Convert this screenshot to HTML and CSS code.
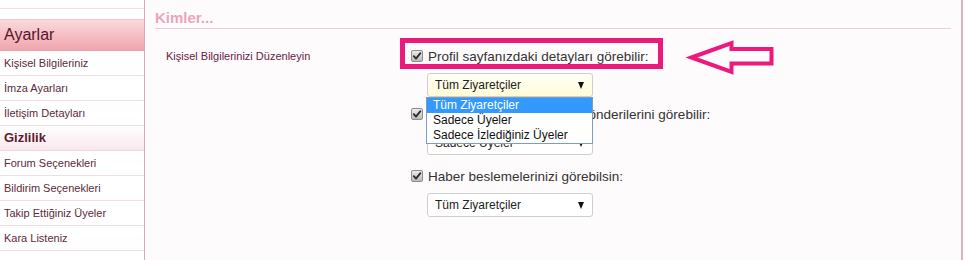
FILE: index.html
```html
<!DOCTYPE html>
<html lang="tr">
<head>
<meta charset="utf-8">
<title>Gizlilik</title>
<link rel="stylesheet" href="styles.css">
</head>
<body>
<div class="page">
  <aside class="sidebar">
    <div class="item"></div>
    <div class="group group-main">Ayarlar</div>
    <div class="item">Kişisel Bilgileriniz</div>
    <div class="item">İmza Ayarları</div>
    <div class="item">İletişim Detayları</div>
    <div class="group group-sub">Gizlilik</div>
    <div class="item">Forum Seçenekleri</div>
    <div class="item">Bildirim Seçenekleri</div>
    <div class="item">Takip Ettiğiniz Üyeler</div>
    <div class="item">Kara Listeniz</div>
    <div class="item"></div>
  </aside>
  <main class="content">
    <h2 class="heading">Kimler...</h2>
    <div class="form">
      <div class="form-label">Kişisel Bilgilerinizi Düzenleyin</div>
      <div class="options">
        <div class="option">
          <div class="option-head">
            <span class="box"><svg width="10" height="10" viewBox="0 0 10 10"><path d="M1.8 5.2 L4 7.6 L8.4 2.2" fill="none" stroke="#2e2e2e" stroke-width="1.9" stroke-linecap="round" stroke-linejoin="round"/></svg></span>
            <span>Profil sayfanızdaki detayları görebilir:</span>
          </div>
          <div class="select-wrap">
            <div class="select select-active"><span>Tüm Ziyaretçiler</span><span class="caret"></span></div>
            <ul class="dropdown">
              <li class="selected">Tüm Ziyaretçiler</li>
              <li>Sadece Üyeler</li>
              <li>Sadece İzlediğiniz Üyeler</li>
            </ul>
          </div>
        </div>
        <div class="option option-spaced">
          <div class="option-head">
            <span class="box"><svg width="10" height="10" viewBox="0 0 10 10"><path d="M1.8 5.2 L4 7.6 L8.4 2.2" fill="none" stroke="#2e2e2e" stroke-width="1.9" stroke-linecap="round" stroke-linejoin="round"/></svg></span>
            <span>Profil sayfanızdaki mesaj gönderilerini görebilir:</span>
          </div>
          <div class="select-wrap">
            <div class="select"><span>Sadece Üyeler</span><span class="caret"></span></div>
          </div>
        </div>
        <div class="option">
          <div class="option-head">
            <span class="box"><svg width="10" height="10" viewBox="0 0 10 10"><path d="M1.8 5.2 L4 7.6 L8.4 2.2" fill="none" stroke="#2e2e2e" stroke-width="1.9" stroke-linecap="round" stroke-linejoin="round"/></svg></span>
            <span>Haber beslemelerinizi görebilsin:</span>
          </div>
          <div class="select-wrap">
            <div class="select"><span>Tüm Ziyaretçiler</span><span class="caret"></span></div>
          </div>
        </div>
      </div>
    </div>
    <div class="highlight"></div>
    <svg class="arrow" width="92" height="40" viewBox="0 0 92 40">
      <polygon points="5.5,19.5 45.5,5 45.5,11 85.5,11 85.5,25.5 45.5,25.5 45.5,34" fill="none" stroke="#ec1a7c" stroke-width="4" stroke-linejoin="miter"/>
    </svg>
  </main>
</div>
</body>
</html>
```
FILE: styles.css
```css
html, body {
  margin: 0;
  padding: 0;
  background: #ffffff;
  font-family: "Liberation Sans", Arial, sans-serif;
  overflow: hidden;
}

.page {
  display: flex;
  height: 260px;
}

/* ---------- sidebar ---------- */
.sidebar {
  width: 144px;
  flex: none;
  margin-top: -16px;
  border-right: 1px solid #dcaabb;
  background: #ffffff;
  overflow: hidden;
}

.item {
  height: 24px;
  line-height: 24px;
  padding-left: 4px;
  border-bottom: 1px solid #f1dde4;
  font-size: 11px;
  color: #5c2a3b;
  white-space: nowrap;
}

.group {
  padding-left: 4px;
  white-space: nowrap;
}

.group-main {
  margin-top: 10px;
  height: 30px;
  line-height: 30px;
  border-top: 1px solid #f4c8cd;
  border-bottom: 1px solid #e9a3ac;
  background: linear-gradient(#fadadd, #f5bcc2 55%, #f0a6ae);
  font-size: 16px;
  color: #58142a;
}

.group-sub {
  height: 24px;
  line-height: 24px;
  border-bottom: 1px solid #efd5dd;
  background: linear-gradient(#ffffff, #f8e8ed);
  font-size: 13px;
  font-weight: bold;
  color: #66182f;
}

/* ---------- content ---------- */
.content {
  position: relative;
  width: 816px;
  flex: none;
  background: #fdfbfc;
  border-right: 2px solid #dcb3c6;
}

.heading {
  margin: 0 10px;
  padding-top: 8px;
  height: 20px;
  line-height: 20px;
  border-bottom: 1px solid #f0cbd8;
  font-size: 15px;
  font-weight: bold;
  color: #eba5be;
}

.form {
  display: grid;
  grid-template-columns: 245px 1fr;
  margin-top: 19px;
  padding-left: 21px;
}

.form-label {
  font-size: 11px;
  line-height: 16px;
  color: #6b2142;
}

.option-head {
  display: flex;
  align-items: center;
  gap: 5px;
  height: 16px;
  font-size: 13.5px;
  color: #333333;
  white-space: nowrap;
}

.option-spaced {
  margin-bottom: 13px;
}

.box {
  width: 12px;
  height: 12px;
  box-sizing: border-box;
  border: 1px solid #8d8d8d;
  border-radius: 2px;
  background: linear-gradient(#ececec, #bcbcbc);
  display: flex;
  align-items: center;
  justify-content: center;
  flex: none;
}

.select-wrap {
  position: relative;
  width: 166px;
  margin: 9px 0 9px 16px;
}

.select {
  display: flex;
  align-items: center;
  justify-content: space-between;
  height: 24px;
  box-sizing: border-box;
  padding: 0 8px 0 7px;
  border: 1px solid #cfcfcf;
  border-radius: 3px;
  background: #ffffff;
  font-size: 12px;
  color: #222222;
  white-space: nowrap;
}

.select-active {
  background: linear-gradient(#fffff4, #fffbd8);
}

.caret {
  width: 0;
  height: 0;
  border-left: 3.5px solid transparent;
  border-right: 3.5px solid transparent;
  border-top: 7px solid #111111;
}

.dropdown {
  position: absolute;
  top: 100%;
  left: -1px;
  z-index: 2;
  width: 167px;
  box-sizing: border-box;
  margin: 0;
  padding: 0;
  list-style: none;
  border: 1px solid #7f9db9;
  background: #ffffff;
}

.dropdown li {
  height: 15px;
  line-height: 15px;
  padding-left: 6px;
  font-size: 12px;
  color: #111111;
  white-space: nowrap;
}

.dropdown li.selected {
  background: #3399ff;
  color: #ffffff;
}

/* ---------- annotation ---------- */
.highlight {
  position: absolute;
  left: 255px;
  top: 38px;
  width: 263px;
  height: 31px;
  box-sizing: border-box;
  border: 5px solid #ec1a7c;
}

.arrow {
  position: absolute;
  left: 541px;
  top: 38px;
}
```
